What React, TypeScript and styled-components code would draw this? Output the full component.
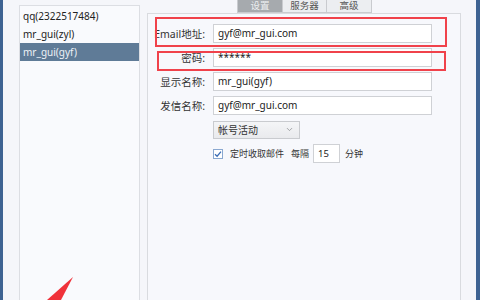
import React from "react";
import styled, { createGlobalStyle } from "styled-components";
import { ChevronDown } from "lucide-react";

const GlobalStyle = createGlobalStyle`
  html, body {
    margin: 0;
    padding: 0;
    background: #f5f6fa;
  }
  * {
    box-sizing: border-box;
  }
`;

const Window = styled.div`
  position: relative;
  width: 480px;
  height: 300px;
  overflow: hidden;
  display: flex;
  gap: 7px;
  padding: 0 15px 0 16px;
  background: #f5f6fa;
  border-left: 3px solid #3e6392;
  border-right: 4px solid #3e6392;
  font-family: "Noto Sans", "Noto Sans CJK SC", sans-serif;
  font-size: 11px;
  color: #333;
`;

const AccountList = styled.ul`
  list-style: none;
  margin: 5px 0 0;
  padding: 1px 0 0;
  width: 121px;
  height: 320px;
  flex-shrink: 0;
  background: #f9fafd;
  border: 1px solid #dcdee3;
`;

const AccountItem = styled.li<{ $active?: boolean }>`
  height: 18px;
  line-height: 18px;
  padding-left: 3px;
  font-size: 10px;
  background: ${({ $active }) => ($active ? "#5f7b97" : "transparent")};
  color: ${({ $active }) => ($active ? "#eef2f6" : "#222")};
`;

const Main = styled.div`
  width: 314px;
  flex-shrink: 0;
  display: flex;
  flex-direction: column;
`;

const TabBar = styled.div`
  display: flex;
  height: 13px;
  padding-left: 90px;
`;

const Tab = styled.div<{ $active?: boolean; $w: number }>`
  width: ${({ $w }) => $w}px;
  height: 13px;
  display: flex;
  align-items: center;
  justify-content: center;
  font-size: 9.5px;
  line-height: 1;
  border: 1px solid #c9cbcf;
  border-top: none;
  border-left-width: ${({ $active }) => ($active ? "1px" : "0")};
  background: ${({ $active }) => ($active ? "#a6aaae" : "#eceef1")};
  color: ${({ $active }) => ($active ? "#eceef0" : "#555")};
`;

const Panel = styled.div`
  position: relative;
  flex: 1;
  background: #f7f8fc;
  border: 1px solid #d9dbdf;
  border-bottom: none;
  padding-top: 10px;
`;

const Form = styled.div`
  display: grid;
  grid-template-columns: 57px 219px;
  column-gap: 8px;
  row-gap: 5px;
  grid-auto-rows: 19px;
  align-items: center;
`;

const Label = styled.label`
  text-align: right;
  white-space: nowrap;
  font-size: 10.5px;
  color: #333;
`;

const TextInput = styled.div`
  height: 19px;
  line-height: 17px;
  padding-left: 4px;
  background: #fff;
  border: 1px solid #cfd1d5;
  color: #222;
  font-size: 10px;
`;

const Select = styled.div`
  width: 87px;
  height: 18px;
  display: flex;
  align-items: center;
  justify-content: space-between;
  padding: 0 5px 0 4px;
  background: linear-gradient(#f4f5f7, #e9eaed);
  border: 1px solid #c9cbcf;
  color: #333;
  font-size: 10px;
`;

const CheckRow = styled.div`
  grid-column: 2;
  display: flex;
  align-items: center;
  font-size: 9px;
  color: #333;
`;

const Check = styled.span`
  width: 10px;
  height: 10px;
  display: flex;
  align-items: center;
  justify-content: center;
  background: #fff;
  border: 1px solid #8aa8d0;
  margin-right: 7px;
`;

const Spacer = styled.span<{ $w: number }>`
  width: ${({ $w }) => $w}px;
  flex-shrink: 0;
`;

const SmallInput = styled.div`
  width: 27px;
  height: 19px;
  line-height: 17px;
  padding-left: 4px;
  background: #fff;
  border: 1px solid #cfd1d5;
  color: #222;
  font-size: 9.5px;
`;

const Mark = styled.div<{ $l: number; $t: number; $w: number; $h: number }>`
  position: absolute;
  left: ${({ $l }) => $l}px;
  top: ${({ $t }) => $t}px;
  width: ${({ $w }) => $w}px;
  height: ${({ $h }) => $h}px;
  border: 2px solid #f0424b;
  pointer-events: none;
`;

const Arrow = styled.svg`
  position: absolute;
  left: 38px;
  top: 274px;
`;

export default function App() {
  return (
    <>
      <GlobalStyle />
      <Window>
        <AccountList>
          <AccountItem>qq(2322517484)</AccountItem>
          <AccountItem>mr_gui(zyl)</AccountItem>
          <AccountItem $active>mr_gui(gyf)</AccountItem>
        </AccountList>
        <Main>
          <TabBar>
            <Tab $active $w={46}>设置</Tab>
            <Tab $w={44}>服务器</Tab>
            <Tab $w={45}>高级</Tab>
          </TabBar>
          <Panel>
            <Form>
              <Label>Email地址:</Label>
              <TextInput>gyf@mr_gui.com</TextInput>
              <Label>密码:</Label>
              <TextInput>******</TextInput>
              <Label>显示名称:</Label>
              <TextInput>mr_gui(gyf)</TextInput>
              <Label>发信名称:</Label>
              <TextInput>gyf@mr_gui.com</TextInput>
              <span />
              <Select>
                <span>帐号活动</span>
                <ChevronDown size={9} color="#8a8c90" strokeWidth={2} />
              </Select>
              <CheckRow>
                <Check>
                  <svg width="8" height="8" viewBox="0 0 8 8">
                    <path d="M1 4.2 L3.1 6.2 L7 1.6" fill="none" stroke="#3b6db5" strokeWidth="1.3" />
                  </svg>
                </Check>
                <span>定时收取邮件</span>
                <Spacer $w={7} />
                <span>每隔</span>
                <Spacer $w={4} />
                <SmallInput>15</SmallInput>
                <Spacer $w={5} />
                <span>分钟</span>
              </CheckRow>
            </Form>
            <Mark $l={7} $t={3} $w={292} $h={30} />
            <Mark $l={9} $t={37} $w={289} $h={20} />
          </Panel>
        </Main>
        <Arrow width="40" height="30" viewBox="0 0 40 30">
          <polygon points="32,3 20,26 6,26" fill="#f0323a" />
        </Arrow>
      </Window>
    </>
  );
}
